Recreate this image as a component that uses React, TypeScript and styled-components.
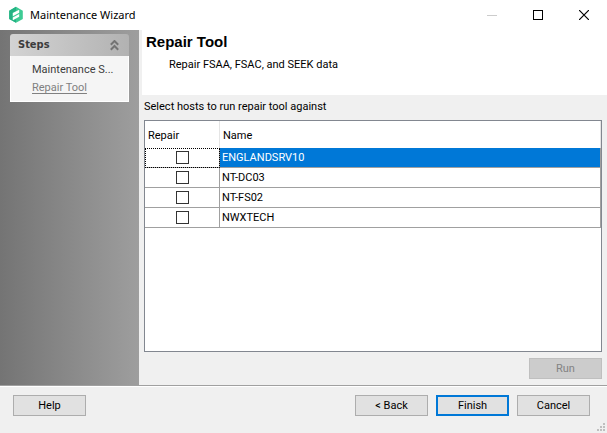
import React, { useState } from "react";
import styled, { createGlobalStyle } from "styled-components";

const GlobalStyle = createGlobalStyle`
  *, *::before, *::after { box-sizing: border-box; }
  body {
    margin: 0;
    background: #f0f0f0;
    color: #000;
    font-family: Roboto, "Liberation Sans", sans-serif;
    font-size: 11px;
    line-height: 14px;
  }
  button, input { font: inherit; margin: 0; }
`;

const Window = styled.div`
  display: flex;
  flex-direction: column;
  min-height: 100vh;
`;

const TitleBar = styled.header`
  display: flex;
  align-items: center;
  height: 30px;
  padding-left: 8px;
  background: #fff;
`;

const WindowTitle = styled.span`
  flex: 1;
  margin-left: 6px;
  font: 11px/16px "Noto Sans", sans-serif;
`;

const CaptionButton = styled.button`
  display: grid;
  place-items: center;
  width: 46px;
  height: 28px;
  padding: 0;
  border: 0;
  background: transparent;
  color: #000;
  &:disabled { color: #ccc; }
`;

const Body = styled.div`
  display: flex;
  flex: 1;
`;

const Sidebar = styled.aside`
  width: 139px;
  padding: 4px 10px;
  background: linear-gradient(90deg, #747474, #9e9e9e);
`;

const StepsHeader = styled.button`
  display: flex;
  align-items: center;
  justify-content: space-between;
  width: 100%;
  height: 22px;
  padding: 0 10px 0 8px;
  border: 0;
  border-radius: 3px 3px 0 0;
  background: linear-gradient(90deg, #d3d3d3, #b2b2b2);
  color: #3c3c3c;
  font-family: "DejaVu Sans Condensed", "DejaVu Sans", sans-serif;
  font-weight: bold;
`;

const StepList = styled.ul`
  display: flex;
  flex-direction: column;
  gap: 4px;
  margin: 0;
  padding: 7px 8px 6px 21px;
  border: 1px solid #fff;
  border-top: 0;
  background: #f5f5f5;
  list-style: none;
`;

const StepItem = styled.li`
  overflow: hidden;
  white-space: nowrap;
`;

const StepLink = styled.a<{ $current?: boolean }>`
  color: ${(p) => (p.$current ? "#808080" : "#3c3c3c")};
  text-decoration: ${(p) => (p.$current ? "underline" : "none")};
  text-underline-offset: 2px;
`;

const Page = styled.main`
  display: flex;
  flex: 1;
  flex-direction: column;
  min-width: 0;
`;

const PageHeader = styled.div`
  height: 65px;
  margin-left: 3px;
  padding: 2px 4px;
  background: #fff;
`;

const Heading = styled.h1`
  margin: 0;
  font: bold 15px/20px "Liberation Sans", Arial, sans-serif;
`;

const Description = styled.p`
  margin: 6px 0 0 23px;
`;

const Content = styled.section`
  display: flex;
  flex: 1;
  flex-direction: column;
  padding: 5px 5px 6px;
`;

const Prompt = styled.p`
  margin: 0 0 6px;
`;

const HostFrame = styled.div`
  flex: 1;
  border: 1px solid #828790;
  background: #fff;
`;

const HostTable = styled.table`
  width: 100%;
  border-spacing: 0;
  table-layout: fixed;
`;

const HeadCell = styled.th<{ $narrow?: boolean }>`
  width: ${(p) => (p.$narrow ? "75px" : "auto")};
  height: 27px;
  padding: 2px 3px 0;
  border-right: 1px solid #e5e5e5;
  font-weight: normal;
  text-align: left;
`;

const Cell = styled.td<{ $selected?: boolean }>`
  height: 20px;
  padding: 0 2px;
  border-right: 1px solid #a0a0a0;
  border-bottom: 1px solid #a0a0a0;
  background: ${(p) => (p.$selected ? "#0078d7" : "#fff")};
  color: ${(p) => (p.$selected ? "#fff" : "#000")};
`;

const CheckCell = styled(Cell)<{ $focused?: boolean }>`
  padding: 0;
  text-align: center;
  outline: ${(p) => (p.$focused ? "1px dotted #000" : "none")};
  outline-offset: -1px;
`;

const CheckBox = styled.input`
  display: block;
  width: 13px;
  height: 13px;
  margin: 0 auto;
  border: 1px solid #333;
  background: #fff;
  appearance: none;
  &:checked { background: #333; box-shadow: inset 0 0 0 2px #fff; }
`;

const PushButton = styled.button<{ $primary?: boolean }>`
  width: 73px;
  height: 21px;
  padding: 1px 0 0;
  border: ${(p) => (p.$primary ? "2px solid #0078d7" : "1px solid #adadad")};
  background: #e1e1e1;
  color: #000;
  &:disabled {
    border-color: #bfbfbf;
    background: #ccc;
    color: #838383;
  }
`;

const RunRow = styled.div`
  display: flex;
  justify-content: flex-end;
  padding-top: 6px;
`;

const Footer = styled.footer`
  display: flex;
  gap: 8px;
  position: relative;
  height: 48px;
  padding: 9px 17px 0 13px;
  border-top: 1px solid #a0a0a0;
  box-shadow: inset 0 1px #fff;
`;

const Spacer = styled.div`
  flex: 1;
`;

const SizeGrip = styled.svg`
  position: absolute;
  right: 2px;
  bottom: 2px;
`;

const Logo = () => (
  <svg width="16" height="18" viewBox="0 0 16 18" aria-hidden="true">
    <path d="M8 .8 14.8 4.7v8.2L8 16.8 1.2 12.9V4.7z" fill="#3dcb94" />
    <path d="M8 .8 1.2 4.7v8.2L8 16.8v-3.3H4.6V6.8L8 4.9z" fill="#25b284" />
    <path d="M4.8 7.1 11.2 3.7v3.1L4.8 10.3z" fill="#fff" />
    <path d="M4.8 11.4 11.2 7.9v2.9l-6.4 3.4z" fill="#fff" />
  </svg>
);

const hosts = ["ENGLANDSRV10", "NT-DC03", "NT-FS02", "NWXTECH"];

export default function App() {
  const [checked, setChecked] = useState<string[]>([]);
  const toggle = (host: string) =>
    setChecked((list) =>
      list.includes(host) ? list.filter((h) => h !== host) : [...list, host]
    );

  return (
    <Window>
      <GlobalStyle />
      <TitleBar>
        <Logo />
        <WindowTitle>Maintenance Wizard</WindowTitle>
        <CaptionButton aria-label="Minimize" disabled>
          <svg width="10" height="10" shapeRendering="crispEdges">
            <path d="M0 5.5h10" stroke="currentColor" />
          </svg>
        </CaptionButton>
        <CaptionButton aria-label="Maximize">
          <svg width="10" height="10" shapeRendering="crispEdges">
            <path d="M.5.5h9v9h-9z" fill="none" stroke="currentColor" />
          </svg>
        </CaptionButton>
        <CaptionButton aria-label="Close">
          <svg width="10" height="10">
            <path d="m0 0 10 10M10 0 0 10" stroke="currentColor" strokeWidth="1.2" />
          </svg>
        </CaptionButton>
      </TitleBar>
      <Body>
        <Sidebar>
          <StepsHeader aria-expanded="true">
            Steps
            <svg width="9" height="11" viewBox="0 0 9 11" aria-hidden="true">
              <path
                d="M.8 4.7 4.5 1l3.7 3.7M.8 9.7 4.5 6l3.7 3.7"
                fill="none"
                stroke="#737373"
                strokeWidth="2"
              />
            </svg>
          </StepsHeader>
          <StepList>
            <StepItem>
              <StepLink href="#selection">Maintenance S...</StepLink>
            </StepItem>
            <StepItem>
              <StepLink href="#repair" $current aria-current="step">
                Repair Tool
              </StepLink>
            </StepItem>
          </StepList>
        </Sidebar>
        <Page>
          <PageHeader>
            <Heading>Repair Tool</Heading>
            <Description>Repair FSAA, FSAC, and SEEK data</Description>
          </PageHeader>
          <Content>
            <Prompt id="prompt">Select hosts to run repair tool against</Prompt>
            <HostFrame>
              <HostTable aria-labelledby="prompt">
                <thead>
                  <tr>
                    <HeadCell $narrow>Repair</HeadCell>
                    <HeadCell>Name</HeadCell>
                  </tr>
                </thead>
                <tbody>
                  {hosts.map((host, i) => (
                    <tr key={host}>
                      <CheckCell $focused={i === 0}>
                        <CheckBox
                          type="checkbox"
                          aria-labelledby={`host-${i}`}
                          checked={checked.includes(host)}
                          onChange={() => toggle(host)}
                        />
                      </CheckCell>
                      <Cell id={`host-${i}`} $selected={i === 0}>
                        {host}
                      </Cell>
                    </tr>
                  ))}
                </tbody>
              </HostTable>
            </HostFrame>
            <RunRow>
              <PushButton disabled>Run</PushButton>
            </RunRow>
          </Content>
        </Page>
      </Body>
      <Footer>
        <PushButton>Help</PushButton>
        <Spacer />
        <PushButton>&lt; Back</PushButton>
        <PushButton $primary>Finish</PushButton>
        <PushButton>Cancel</PushButton>
        <SizeGrip width="8" height="8" shapeRendering="crispEdges" aria-hidden="true">
          <path
            d="M6 0h2v2H6zM3 3h2v2H3zM6 3h2v2H6zM0 6h2v2H0zM3 6h2v2H3zM6 6h2v2H6z"
            fill="#bfbfbf"
          />
        </SizeGrip>
      </Footer>
    </Window>
  );
}
